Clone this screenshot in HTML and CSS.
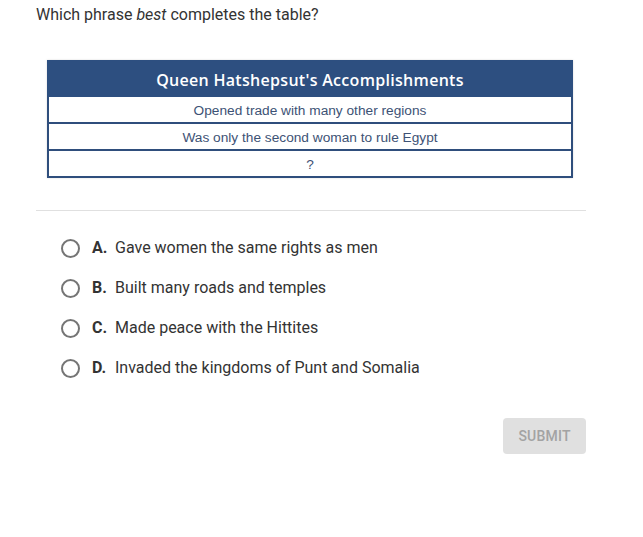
FILE: index.html
```html
<!DOCTYPE html>
<html>
<head>
<meta charset="utf-8">
<link rel="stylesheet" href="styles.css">
</head>
<body>
<div class="page">
  <p class="question">Which phrase <em>best</em> completes the table?</p>
  <div class="figure">
    <div class="tbl">
      <div class="tbl-head">Queen Hatshepsut's Accomplishments</div>
      <div class="tbl-row">Opened trade with many other regions</div>
      <div class="tbl-row">Was only the second woman to rule Egypt</div>
      <div class="tbl-row">?</div>
    </div>
  </div>
  <hr class="divider">
  <ul class="options">
    <li class="option"><span class="radio"></span><span class="letter">A.</span><span class="text">Gave women the same rights as men</span></li>
    <li class="option"><span class="radio"></span><span class="letter">B.</span><span class="text">Built many roads and temples</span></li>
    <li class="option"><span class="radio"></span><span class="letter">C.</span><span class="text">Made peace with the Hittites</span></li>
    <li class="option"><span class="radio"></span><span class="letter">D.</span><span class="text">Invaded the kingdoms of Punt and Somalia</span></li>
  </ul>
  <div class="actions">
    <button class="submit">SUBMIT</button>
  </div>
</div>
</body>
</html>
```

FILE: styles.css
```css
html, body {
  margin: 0;
  padding: 0;
  background: #fff;
}
body {
  font-family: Roboto, "Liberation Sans", sans-serif;
  color: #333;
}
.page {
  width: 550px;
  padding: 5px 0 0 36px;
}
.question {
  margin: 0;
  font-size: 16px;
  line-height: 19px;
  color: #333;
}
.question em {
  font-style: italic;
}
.figure {
  padding: 36px 0 0 11px;
}
.tbl {
  width: 522px;
  border: 2px solid #2f4e7c;
  border-top: 0;
  background: #2f4e7c;
  display: flex;
  flex-direction: column;
  gap: 2px;
  box-shadow: 0 0 2px rgba(0,0,0,0.15);
}
.tbl-head {
  height: 37px;
  margin: 0 -2px -2px;
  background: #2d4f80;
  color: #fff;
  font-family: "Open Sans", "Noto Sans", sans-serif;
  font-weight: 600;
  font-size: 16px;
  letter-spacing: 0.3px;
  display: flex;
  align-items: center;
  justify-content: center;
  padding-top: 2px;
  box-sizing: border-box;
}
.tbl-row {
  height: 25px;
  background: #fff;
  color: #3d5275;
  font-family: "Liberation Sans", Arial, sans-serif;
  font-size: 13.7px;
  display: flex;
  align-items: center;
  justify-content: center;
  padding-top: 1px;
  box-sizing: border-box;
}
.divider {
  margin: 32px 0 0 0;
  border: 0;
  border-top: 1px solid #e0e0e0;
  width: 550px;
}
.options {
  list-style: none;
  margin: 0;
  padding: 26px 0 0 25px;
  display: flex;
  flex-direction: column;
  gap: 19px;
}
.option {
  display: flex;
  align-items: center;
  height: 21px;
  font-size: 16px;
  color: #333;
}
.radio {
  width: 15px;
  height: 15px;
  border: 2px solid #757575;
  border-radius: 50%;
  box-sizing: content-box;
  margin-right: 12px;
  margin-top: 1px;
}
.letter {
  font-weight: 700;
  width: 23px;
}
.actions {
  display: flex;
  justify-content: flex-end;
  padding-top: 40px;
}
.submit {
  width: 83px;
  height: 36px;
  border: 0;
  border-radius: 4px;
  background: #e0e0e0;
  color: #a3a3a3;
  font-family: Roboto, sans-serif;
  font-weight: 500;
  font-size: 14px;
  letter-spacing: 0.2px;
}
```
